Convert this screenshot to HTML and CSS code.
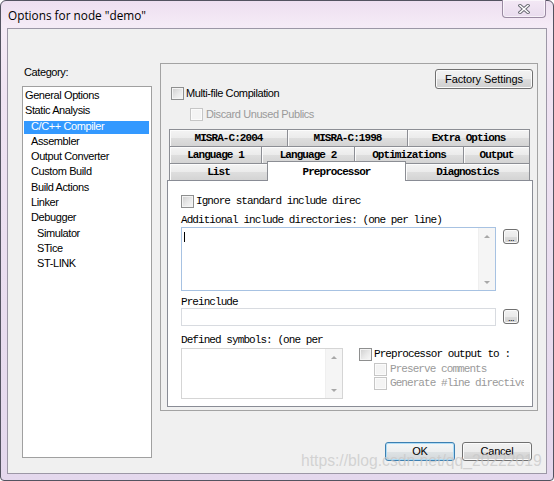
FILE: index.html
```html
<!DOCTYPE html>
<html>
<head>
<meta charset="utf-8">
<title>Options for node "demo"</title>
<link rel="stylesheet" href="styles.css">
</head>
<body>
<div class="window">
  <div class="titlebar">
    <span class="title">Options for node "demo"</span>
    <div class="close">
      <svg width="12" height="10" viewBox="0 0 12 10">
        <path d="M2 1.5 L10 8.5 M10 1.5 L2 8.5" stroke="#6a6a74" stroke-width="3.4" stroke-linecap="square" fill="none"/>
        <path d="M2 1.5 L10 8.5 M10 1.5 L2 8.5" stroke="#ffffff" stroke-width="1.5" stroke-linecap="square" fill="none"/>
      </svg>
    </div>
  </div>
  <div class="client">
    <div class="left">
      <div class="cat-label">Category:</div>
      <ul class="catlist">
        <li class="lv0">General Options</li>
        <li class="lv0">Static Analysis</li>
        <li class="lv1 sel">C/C++ Compiler</li>
        <li class="lv1">Assembler</li>
        <li class="lv1">Output Converter</li>
        <li class="lv1">Custom Build</li>
        <li class="lv1">Build Actions</li>
        <li class="lv1">Linker</li>
        <li class="lv1">Debugger</li>
        <li class="lv2">Simulator</li>
        <li class="lv2">STice</li>
        <li class="lv2">ST-LINK</li>
      </ul>
    </div>

    <div class="panel">
      <div class="panel-head">
        <div class="head-opts">
          <div class="crow"><span class="chk"></span><span>Multi-file Compilation</span></div>
          <div class="crow indent dis"><span class="chk off"></span><span>Discard Unused Publics</span></div>
        </div>
        <div class="btn factory">Factory Settings</div>
      </div>

      <div class="tabs mono">
        <div class="tabrow">
          <div class="tab w118">MISRA-C:2004</div>
          <div class="tab w120">MISRA-C:1998</div>
          <div class="tab w123 last">Extra Options</div>
        </div>
        <div class="tabrow">
          <div class="tab w92">Language 1</div>
          <div class="tab w93">Language 2</div>
          <div class="tab w109">Optimizations</div>
          <div class="tab w67 last">Output</div>
        </div>
        <div class="tabrow">
          <div class="tab w98">List</div>
          <div class="tab sel w139">Preprocessor</div>
          <div class="tab w124 last noleft">Diagnostics</div>
        </div>
      </div>

      <div class="tabpane mono">
        <div class="mrow"><span class="chk"></span><span>Ignore standard include direc</span></div>
        <div class="lbl lbl-add">Additional include directories: (one per line)</div>
        <div class="field-row">
          <div class="tbox focus">
            <div class="ta"><span class="caret"></span></div>
            <div class="vscroll">
              <div class="sbtn"><span class="arr-up"></span></div>
              <div class="sbtn"><span class="arr-dn"></span></div>
            </div>
          </div>
          <div class="btn dots">...</div>
        </div>
        <div class="lbl lbl-pre">Preinclude</div>
        <div class="field-row">
          <div class="inp"></div>
          <div class="btn dots dots2">...</div>
        </div>
        <div class="lower">
          <div class="lower-left">
            <div class="lbl lbl-def">Defined symbols: (one per</div>
            <div class="tbox small">
              <div class="ta"></div>
              <div class="vscroll">
                <div class="sbtn"><span class="arr-up"></span></div>
                <div class="sbtn"><span class="arr-dn"></span></div>
              </div>
            </div>
          </div>
          <div class="lower-right">
            <div class="mrow"><span class="chk"></span><span>Preprocessor output to :</span></div>
            <div class="mrow sub dis"><span class="chk off"></span><span>Preserve comments</span></div>
            <div class="mrow sub dis"><span class="chk off"></span><span>Generate #line directive</span></div>
          </div>
        </div>
      </div>
    </div>

    <div class="buttons">
      <div class="btn dlg default">OK</div>
      <div class="btn dlg">Cancel</div>
    </div>

    <div class="watermark">https://blog.csdn.net/qq_20222019</div>
  </div>
</div>
</body>
</html>
```

FILE: styles.css
```css
html, body {
  margin: 0;
  padding: 0;
}
body {
  width: 554px;
  height: 481px;
  overflow: hidden;
  background: #ffffff;
  font-family: "Liberation Sans", Arial, sans-serif;
  font-size: 11px;
  color: #000;
}

.window {
  box-sizing: border-box;
  width: 554px;
  height: 481px;
  border: 1px solid #535360;
  border-radius: 6px 6px 4px 4px;
  background: linear-gradient(180deg, #eddff0 0%, #f5ebf6 5%, #efe3f2 20%, #e4d8ed 100%);
  padding: 0 6px 6px 6px;
  display: flex;
  flex-direction: column;
}

.titlebar {
  height: 27px;
  flex: none;
  display: flex;
  align-items: flex-start;
}
.title {
  font-family: "Open Sans", "Noto Sans", sans-serif;
  font-size: 11.8px;
  line-height: 16px;
  margin: 6px 0 0 1px;
  color: #000;
}
.close {
  box-sizing: border-box;
  width: 44px;
  height: 18px;
  margin: -1px 1px 0 auto;
  border: 1px solid #9a8aa2;
  border-top: none;
  border-radius: 0 0 4px 4px;
  background: linear-gradient(180deg, #f3e8f5, #e9dcee);
  box-shadow: inset 0 0 0 1px rgba(255,255,255,0.6);
  display: flex;
  align-items: center;
  justify-content: center;
}

.client {
  box-sizing: border-box;
  flex: 1;
  border: 1px solid #9c97a6;
  background: #f0f0f0;
  position: relative;
  display: grid;
  grid-template-columns: 130px 378px;
  grid-template-rows: 348px auto;
  column-gap: 8px;
  align-content: start;
  padding: 34px 0 0 14px;
}

/* left column */
.left {
  grid-column: 1;
  grid-row: 1 / span 2;
  margin-top: 3px;
  letter-spacing: -0.4px;
}
.cat-label {
  height: 13px;
  line-height: 13px;
  padding-left: 2px;
  margin-bottom: 7px;
}
.catlist {
  box-sizing: border-box;
  list-style: none;
  margin: 0;
  padding: 1px 0 0 0;
  height: 372px;
  border: 1px solid #a0a0a0;
  background: #fff;
}
.catlist li {
  height: 15.3px;
  line-height: 15.3px;
  white-space: nowrap;
}
.lv0 { padding-left: 2px; }
.lv1 { padding-left: 8px; }
.lv2 { padding-left: 14px; }
.catlist li.sel {
  color: #fff;
  margin-left: 1px;
  margin-right: 2px;
  padding-left: 7px;
  background: linear-gradient(#3399ff, #3399ff) 0 2px / 100% 13px no-repeat;
}

/* panel */
.panel {
  grid-column: 2;
  grid-row: 1;
  box-sizing: border-box;
  width: 378px;
  height: 348px;
  border: 1px solid #a3a3a3;
  padding: 5px 4px 4px 6px;
  display: flex;
  flex-direction: column;
}
.panel-head {
  flex: none;
  height: 60px;
  display: flex;
  justify-content: space-between;
  align-items: flex-start;
  letter-spacing: -0.4px;
}
.head-opts {
  padding: 18px 0 0 4px;
}
.crow {
  display: flex;
  align-items: center;
  gap: 2px;
  height: 13px;
  line-height: 13px;
  white-space: nowrap;
}
.crow.indent {
  margin: 8px 0 0 19px;
  gap: 3px;
}
.dis { color: #9a9a9a; }

.chk {
  box-sizing: border-box;
  flex: none;
  width: 13px;
  height: 13px;
  border: 1px solid #8e8f8f;
  background: linear-gradient(135deg, #cdcdcd 0%, #e9e9e9 55%, #f8f8f8 100%);
  box-shadow: inset 0 0 0 1px #f4f4f4;
}
.chk.off {
  border-color: #c6c6c6;
  background: #f4f4f4;
  box-shadow: inset 0 0 0 1px #fbfbfb;
}

.btn {
  box-sizing: border-box;
  border: 1px solid #707070;
  border-radius: 3px;
  background: linear-gradient(180deg, #f2f2f2 0%, #ebebeb 50%, #dddddd 51%, #cfcfcf 100%);
  box-shadow: inset 0 0 0 1px #fbfbfb;
  text-align: center;
  color: #000;
  font-family: "Liberation Sans", Arial, sans-serif;
  letter-spacing: -0.2px;
}
.factory {
  width: 98px;
  height: 20px;
  line-height: 18px;
  letter-spacing: -0.1px;
}

/* tabs */
.mono {
  font-family: "Liberation Mono", "Courier New", monospace;
  font-size: 11px;
  letter-spacing: -0.93px;
}
.tabs {
  flex: none;
  margin: 0 3px 0 2px;
}
.tabrow {
  display: flex;
  align-items: flex-start;
  height: 17px;
}
.tab {
  box-sizing: border-box;
  flex: none;
  height: 17px;
  line-height: 16px;
  border-top: 1px solid #8c8e94;
  border-left: 1px solid #8c8e94;
  background: linear-gradient(180deg, #f4f4f4 0%, #ebebeb 50%, #dedede 51%, #d4d4d4 100%);
  box-shadow: inset 1px 1px 0 #fcfcfc;
  text-align: center;
  white-space: nowrap;
  font-weight: bold;
}
.tab.last { border-right: 1px solid #8c8e94; }
.tab.noleft { border-left: none; }
.tab.sel {
  position: relative;
  z-index: 1;
  height: 20px;
  margin-top: -2px;
  padding-top: 1px;
  line-height: 18px;
  background: #fff;
  box-shadow: none;
  border-right: 1px solid #8c8e94;
}
.w118 { width: 118px; }
.w120 { width: 120px; }
.w123 { width: 123px; }
.w92 { width: 92px; }
.w93 { width: 93px; }
.w109 { width: 109px; }
.w67 { width: 67px; }
.w98 { width: 98px; }
.w139 { width: 139px; }
.w124 { width: 124px; }

.tabpane {
  box-sizing: border-box;
  flex: none;
  height: 227px;
  border: 1px solid #898c95;
  background: #fff;
  padding: 14px 0 0 13px;
}
.mrow {
  display: flex;
  align-items: center;
  gap: 2px;
  height: 13px;
  line-height: 13px;
  white-space: nowrap;
}
.lbl {
  height: 12px;
  line-height: 12px;
  white-space: nowrap;
}
.lbl-add { margin-top: 6px; margin-bottom: 1px; }
.lbl-pre { margin-top: 5px; }
.lbl-def { margin-bottom: 2px; }

.field-row {
  display: flex;
  align-items: flex-start;
}
.tbox {
  box-sizing: border-box;
  width: 315px;
  height: 64px;
  border: 1px solid #d5d5d5;
  background: #fff;
  display: flex;
}
.tbox.focus { border-color: #a7c2e2; }
.tbox.small {
  width: 162px;
  height: 51px;
}
.ta { flex: 1; }
.caret {
  display: block;
  width: 1px;
  height: 10px;
  background: #000;
  margin: 4px 0 0 2px;
}
.vscroll {
  width: 16px;
  background: #f5f5f5;
  border-left: 1px solid #efefef;
  display: flex;
  flex-direction: column;
  justify-content: space-between;
}
.sbtn {
  height: 16px;
  display: flex;
  align-items: center;
  justify-content: center;
}
.arr-up {
  width: 0;
  height: 0;
  border-left: 3px solid transparent;
  border-right: 3px solid transparent;
  border-bottom: 3px solid #a8a8a8;
}
.arr-dn {
  width: 0;
  height: 0;
  border-left: 3px solid transparent;
  border-right: 3px solid transparent;
  border-top: 3px solid #a8a8a8;
}
.dots {
  width: 16px;
  height: 15px;
  margin: 2px 0 0 7px;
  font-size: 9px;
  line-height: 17px;
  letter-spacing: -0.5px;
  font-family: "Liberation Sans", Arial, sans-serif;
}
.dots2 { margin-top: 1px; }
.inp {
  box-sizing: border-box;
  width: 315px;
  height: 18px;
  border: 1px solid #d8dbe0;
  background: #fff;
}

.lower {
  display: flex;
  margin-top: 8px;
}
.lower-left { width: 162px; }
.lower-right {
  width: 165px;
  margin: 14px 0 0 16px;
  overflow: hidden;
}
.mrow.sub {
  margin: 1.5px 0 0 15px;
  gap: 3px;
}

/* bottom buttons */
.buttons {
  grid-column: 2;
  grid-row: 2;
  justify-self: end;
  margin: 31px 6px 0 0;
  display: flex;
  gap: 7px;
}
.dlg {
  width: 70px;
  height: 19px;
  line-height: 17px;
  font-size: 11px;
}
.dlg.default {
  border-color: #3c7fb1;
  box-shadow: inset 0 0 0 1px #aedcf6;
  background: linear-gradient(180deg, #f4f6f7 0%, #eceeef 50%, #dfe3e5 51%, #d3d8db 100%);
}

.watermark {
  position: absolute;
  left: 293px;
  top: 423px;
  font-family: "Liberation Sans", Arial, sans-serif;
  font-size: 15.7px;
  line-height: 18px;
  color: rgba(200, 200, 200, 0.75);
  white-space: nowrap;
}
```
